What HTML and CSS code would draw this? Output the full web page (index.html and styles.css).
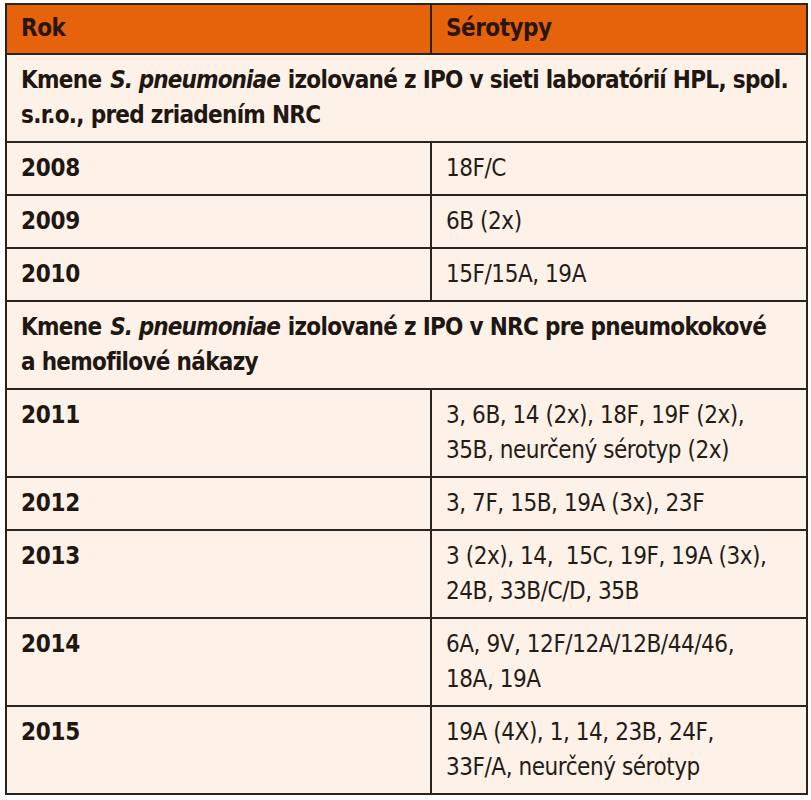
FILE: index.html
```html
<!DOCTYPE html>
<html lang="sk">
<head>
<meta charset="utf-8">
<title>Sérotypy</title>
<link rel="stylesheet" href="styles.css">
</head>
<body>
<table class="tbl">
  <thead>
    <tr class="head">
      <th class="c-year">Rok</th>
      <th class="c-val">Sérotypy</th>
    </tr>
  </thead>
  <tbody>
    <tr class="section">
      <td colspan="2">Kmene <i>S. pneumoniae</i> izolované z IPO v sieti laboratórií HPL, spol. s.r.o., pred zriadením NRC</td>
    </tr>
    <tr><td class="year">2008</td><td class="val">18F/C</td></tr>
    <tr><td class="year">2009</td><td class="val">6B (2x)</td></tr>
    <tr><td class="year">2010</td><td class="val">15F/15A, 19A</td></tr>
    <tr class="section">
      <td colspan="2">Kmene <i>S. pneumoniae</i> izolované z IPO v NRC pre pneumokokové a&nbsp;hemofilové nákazy</td>
    </tr>
    <tr><td class="year">2011</td><td class="val">3, 6B, 14 (2x), 18F, 19F (2x), 35B, neurčený sérotyp (2x)</td></tr>
    <tr><td class="year">2012</td><td class="val">3, 7F, 15B, 19A (3x), 23F</td></tr>
    <tr><td class="year">2013</td><td class="val">3 (2x), 14,&nbsp; 15C, 19F, 19A (3x), 24B, 33B/C/D, 35B</td></tr>
    <tr><td class="year">2014</td><td class="val">6A, 9V, 12F/12A/12B/44/46, 18A, 19A</td></tr>
    <tr><td class="year">2015</td><td class="val">19A (4X), 1, 14, 23B, 24F, 33F/A, neurčený sérotyp</td></tr>
  </tbody>
</table>
</body>
</html>
```

FILE: styles.css
```css
html, body {
  margin: 0;
  padding: 0;
  background: #ffffff;
}

body {
  padding: 3px 3px 0 5px;
  font-family: "DejaVu Sans Condensed", "DejaVu Sans", sans-serif;
  font-stretch: condensed;
  color: #1e1712;
}

.tbl {
  width: 803px;
  border-collapse: collapse;
  background: #fdf1e8;
  border: 2px solid #2a2420;
  font-size: 24px;
  line-height: 35px;
}

.tbl th,
.tbl td {
  border: 2px solid #2a2420;
  padding: 8px 14px 8px 14px;
  text-align: left;
  vertical-align: top;
}

.head th {
  background: #e6620b;
  color: #2a1609;
  font-weight: bold;
  padding-top: 6px;
  padding-bottom: 7px;
  letter-spacing: -0.5px;
}

.c-year {
  width: 395px;
}

.section td {
  font-weight: bold;
  letter-spacing: -0.7px;
  padding-right: 10px;
}

.section i {
  font-style: italic;
  letter-spacing: -0.9px;
  margin: 0 1px 0 2px;
}

.year {
  font-weight: bold;
  letter-spacing: -0.3px;
}

.tbl .val {
  font-weight: normal;
  color: #231c17;
  letter-spacing: -0.45px;
  padding-right: 30px;
}
```
